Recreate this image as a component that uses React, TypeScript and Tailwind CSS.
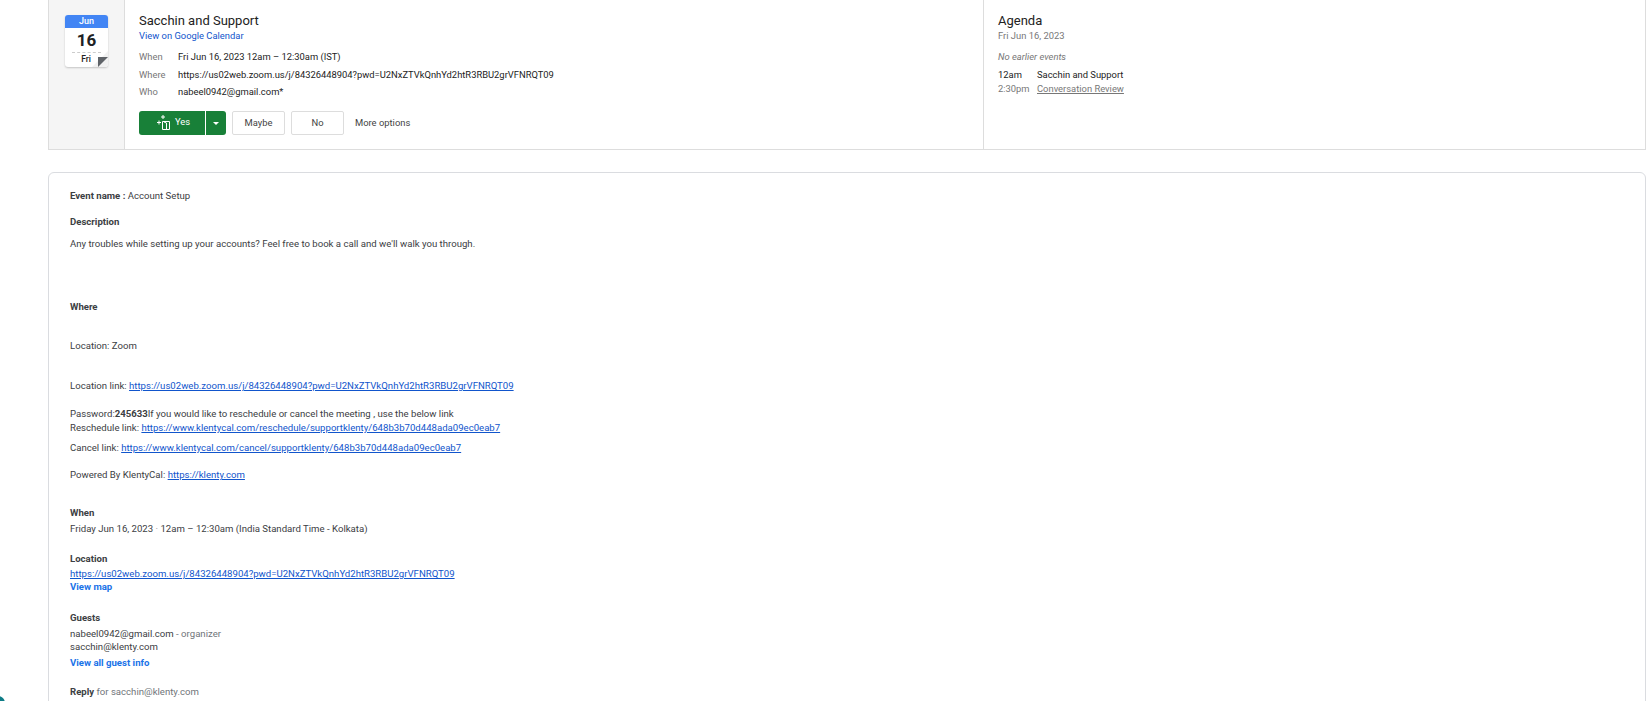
import React from "react";

const link = "text-[#1155cc] underline";
const Bold = ({ children, className = "" }: { children: React.ReactNode; className?: string }) => (
  <div className={`font-bold h-4 leading-4 ${className}`}>{children}</div>
);
const Line = ({ children, className = "" }: { children: React.ReactNode; className?: string }) => (
  <div className={`h-4 leading-4 ${className}`}>{children}</div>
);

function CalendarTile() {
  return (
    <div className="relative w-[43px] h-[52px] bg-white rounded-[3px] shadow-[0_1px_2px_rgba(0,0,0,0.2)] overflow-hidden">
      <div className="h-[13px] bg-[#4285f4] text-white text-[9px] leading-[13px] text-center font-medium">Jun</div>
      <div className="text-center text-[#202124] text-[17px] leading-[22px] mt-[1px] font-bold">16</div>
      <div className="mx-[7px] mt-[1px] border-t border-dashed border-[#cccccc]"></div>
      <div className="text-center text-[8.5px] leading-[12px] text-[#222222] font-medium pr-[1px]">Fri</div>
      <svg className="absolute right-0 bottom-0" width="20" height="20" viewBox="0 0 20 20">
        <path d="M20 20H4L20 4z" fill="#f1f1f1" />
        <path d="M10 10h10L10 20z" fill="#5f6368" />
      </svg>
    </div>
  );
}

function YesIcon() {
  return (
    <svg width="13" height="15" viewBox="0 0 13 15" fill="none" stroke="#ffffff" strokeWidth="1">
      <path d="M6 0v4M4 2h4M0 7.5h4M2 5.5v4" />
      <path d="M5.5 6.5h7v8h-7z" />
      <path d="M7 7l2.5 1v6.5" />
    </svg>
  );
}

function Row({ label, children, className = "" }: { label: string; children: React.ReactNode; className?: string }) {
  return (
    <div className={`flex h-4 leading-4 ${className}`}>
      <div className="w-[39px] text-[#777777]">{label}</div>
      <div className="text-[#222222]">{children}</div>
    </div>
  );
}

export default function App() {
  return (
    <div className="relative h-[701px] overflow-hidden bg-white pl-[48px] pr-px font-['Roboto','Liberation_Sans',sans-serif] text-[9.6px]">
      <div className="flex h-[150px] border border-t-0 border-[#dddddd] text-[9.4px]">
        <div className="w-[76px] shrink-0 bg-[#f5f5f5] border-r border-[#dddddd] pt-[15px] pl-[16px]">
          <CalendarTile />
        </div>
        <div className="w-[859px] shrink-0 border-r border-[#dddddd] pl-[14px] pt-[12px]">
          <div className="text-[13px] leading-[18px] text-[#222222]">Sacchin and Support</div>
          <div className="text-[#1155cc] leading-[14px] mt-[-1px]">View on Google Calendar</div>
          <Row label="When" className="mt-[6px]">Fri Jun 16, 2023 12am – 12:30am (IST)</Row>
          <Row label="Where" className="mt-[2px]">https://us02web.zoom.us/j/84326448904?pwd=U2NxZTVkQnhYd2htR3RBU2grVFNRQT09</Row>
          <Row label="Who" className="mt-[1px]">nabeel0942@gmail.com*</Row>
          <div className="flex items-center mt-[11px] h-[24px] text-[#444444]">
            <div className="flex h-full w-[87px] rounded-[3px] bg-[#188038] text-white">
              <div className="w-[67px] flex items-center justify-center gap-[5px] border-r border-white pl-[3px] pb-px">
                <YesIcon />
                <span>Yes</span>
              </div>
              <div className="flex-1 flex items-center justify-center">
                <div className="border-x-[3px] border-x-transparent border-t-[3px] border-t-white"></div>
              </div>
            </div>
            <div className="ml-[6px] w-[53px] h-full flex items-center justify-center border border-[#dddddd] rounded-[2px]">Maybe</div>
            <div className="ml-[6px] w-[53px] h-full flex items-center justify-center border border-[#dddddd] rounded-[2px]">No</div>
            <div className="ml-[11px]">More options</div>
          </div>
        </div>
        <div className="flex-1 pl-[14px] pt-[12px]">
          <div className="text-[13px] leading-[18px] text-[#222222]">Agenda</div>
          <div className="text-[#777777] leading-[14px] mt-[-1px]">Fri Jun 16, 2023</div>
          <div className="text-[#777777] italic leading-4 mt-[6px]">No earlier events</div>
          <div className="flex h-4 leading-4 mt-[2px] text-[#222222]">
            <div className="w-[39px]">12am</div>
            <div>Sacchin and Support</div>
          </div>
          <div className="flex h-4 leading-4 mt-[-2px] text-[#777777]">
            <div className="w-[39px]">2:30pm</div>
            <div className="underline">Conversation Review</div>
          </div>
        </div>
      </div>

      <div className="mt-[22px] h-[600px] border border-[#dadce0] rounded-[6px] pl-[21px] pt-[15px] text-[#3c4043]">
        <Line><b>Event name :</b> Account Setup</Line>
        <Bold className="mt-[10px]">Description</Bold>
        <Line className="mt-[6px]">Any troubles while setting up your accounts? Feel free to book a call and we'll walk you through.</Line>
        <Bold className="mt-[47px]">Where</Bold>
        <Line className="mt-[23px]">Location: Zoom</Line>
        <Line className="mt-[24px]">Location link: <span className={link}>https://us02web.zoom.us/j/84326448904?pwd=U2NxZTVkQnhYd2htR3RBU2grVFNRQT09</span></Line>
        <Line className="mt-[12px]">Password:<b>245633</b>If you would like to reschedule or cancel the meeting , use the below link</Line>
        <Line className="mt-[-2px]">Reschedule link: <span className={link}>https://www.klentycal.com/reschedule/supportklenty/648b3b70d448ada09ec0eab7</span></Line>
        <Line className="mt-[4px]">Cancel link: <span className={link}>https://www.klentycal.com/cancel/supportklenty/648b3b70d448ada09ec0eab7</span></Line>
        <Line className="mt-[11px]">Powered By KlentyCal: <span className={link}>https://klenty.com</span></Line>
        <Bold className="mt-[22px]">When</Bold>
        <Line className="mt-0">Friday Jun 16, 2023 <span className="text-[#9aa0a6]">·</span> 12am – 12:30am (India Standard Time - Kolkata)</Line>
        <Bold className="mt-[14px]">Location</Bold>
        <Line className="mt-[-1px]"><span className={link}>https://us02web.zoom.us/j/84326448904?pwd=U2NxZTVkQnhYd2htR3RBU2grVFNRQT09</span></Line>
        <Bold className="mt-[-3px] text-[#1a73e8]">View map</Bold>
        <Bold className="mt-[15px]">Guests</Bold>
        <Line>nabeel0942@gmail.com <span className="text-[#70757a]">- organizer</span></Line>
        <Line className="mt-[-3px]">sacchin@klenty.com</Line>
        <Bold className="mt-0 text-[#1a73e8]">View all guest info</Bold>
        <Line className="mt-[13px] text-[#70757a]"><b className="text-[#3c4043]">Reply</b> for sacchin@klenty.com</Line>
      </div>

      <div className="absolute left-[-9px] bottom-[-9px] w-[14px] h-[14px] rounded-full bg-[#0e7c86]"></div>
    </div>
  );
}
